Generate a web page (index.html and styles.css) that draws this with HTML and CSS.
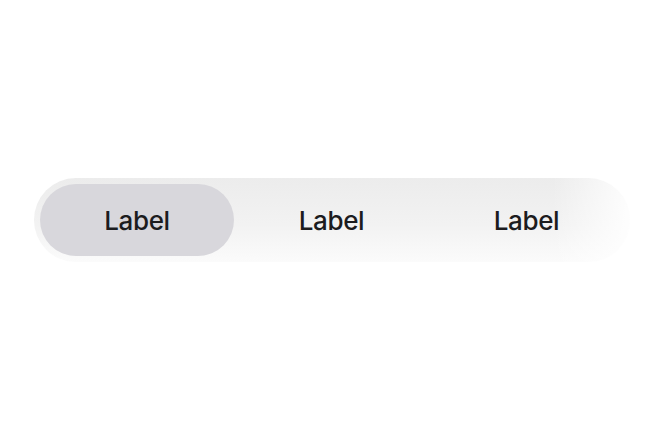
FILE: index.html
```html
<!DOCTYPE html>
<html>
	<head>
		<meta charset="utf-8">
		<title>Segmented control</title>
		<link rel="stylesheet" href="styles.css">
	</head>
	<body>
		<div class="segmented">
			<button class="segment active">Label</button>
			<button class="segment">Label</button>
			<button class="segment">Label</button>
		</div>
	</body>
</html>
```
FILE: styles.css
```css
html, body{
	margin: 0;
	background: #fff;
}
body{
	height: 440px;
	display: flex;
	align-items: flex-start;
	font-family: Inter, "Noto Sans", sans-serif;
}
.segmented{
	margin: 178px 0 0 34px;
	width: 596px;
	height: 84px;
	box-sizing: border-box;
	padding: 6px;
	border-radius: 42px;
	display: flex;
	background:
		linear-gradient(to right, rgba(255,255,255,0) 0%, rgba(255,255,255,0) 87%, rgba(255,255,255,0.9) 100%),
		linear-gradient(to bottom, #ececec 0%, #f2f2f2 55%, #fbfbfb 100%);
}
.segment{
	flex: 1;
	border: none;
	background: transparent;
	border-radius: 36px;
	font-family: Inter, "Noto Sans", sans-serif;
	font-size: 26px;
	font-weight: 500;
	letter-spacing: -0.4px;
	color: #1c1c1e;
	padding: 0;
	padding-top: 1px;
}
.segment.active{
	flex: 0 0 194px;
	background: #d8d7dc;
}
```
